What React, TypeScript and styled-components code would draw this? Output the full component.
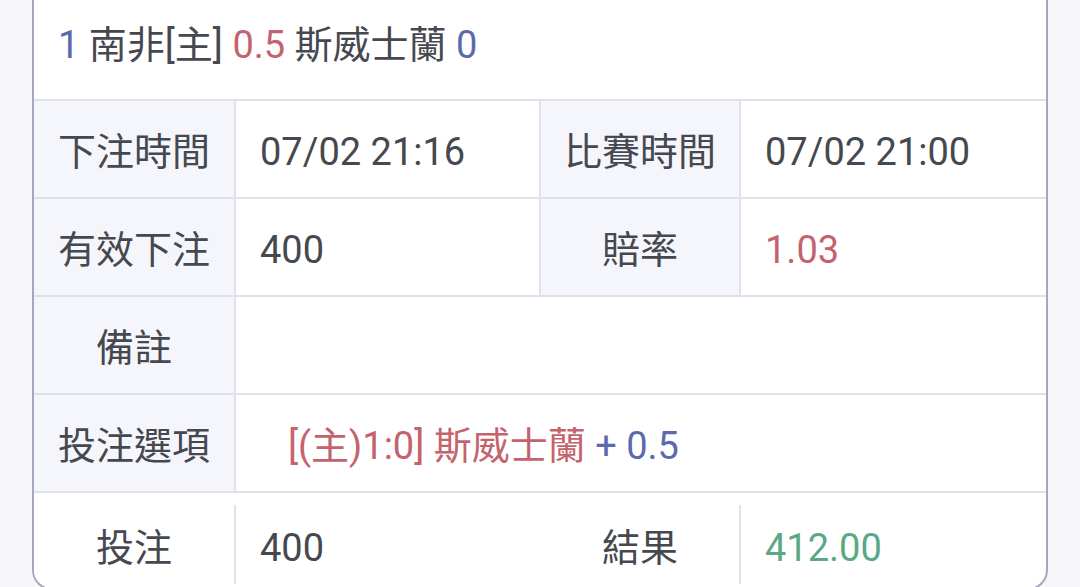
import React from "react";
import styled, { createGlobalStyle } from "styled-components";

const Global = createGlobalStyle`
  html, body { margin: 0; padding: 0; background: #f6f6f8; overflow: hidden; }
  body { font-family: "Roboto", "Noto Sans CJK TC", sans-serif; }
`;

const LINE = "#e0e1ea";
const LABEL_BG = "#f5f6fb";

const Page = styled.div`
  width: 1080px;
  height: 587px;
  padding-left: 32px;
  box-sizing: border-box;
  overflow: hidden;
`;

const Card = styled.div`
  width: 1016px;
  height: 590px;
  box-sizing: border-box;
  background: #ffffff;
  border: 2px solid #a6a7bf;
  border-top: none;
  border-radius: 0 0 20px 20px;
  display: flex;
  flex-direction: column;
  overflow: hidden;
  color: #46484f;
  font-size: 38px;
  line-height: 1;
`;

const Header = styled.div`
  flex: 0 0 auto;
  border-bottom: 2px solid ${LINE};
  display: flex;
  align-items: center;
  padding: 0 0 10px 24px;
  box-sizing: border-box;
  height: 101px;
  white-space: pre;
`;

const Tone = styled.span<{ $c: "red" | "blue" | "green" | "dark" }>`
  color: ${(p) =>
    p.$c === "red"
      ? "#c5636d"
      : p.$c === "blue"
      ? "#5c6aac"
      : p.$c === "green"
      ? "#58a984"
      : "#46484f"};
`;

const Row = styled.div<{ $last?: boolean }>`
  display: grid;
  grid-template-columns: 202px 305px 200px 1fr;
  height: 98px;
  flex: 0 0 auto;
  box-sizing: border-box;
  border-bottom: ${(p) => (p.$last ? "none" : `2px solid ${LINE}`)};
  padding: ${(p) => (p.$last ? "12px 0 7px" : "0")};
`;

const Label = styled.div<{ $plain?: boolean }>`
  background: ${(p) => (p.$plain ? "#ffffff" : LABEL_BG)};
  border-right: 2px solid ${LINE};
  display: flex;
  align-items: center;
  justify-content: center;
  padding-top: 6px;
  box-sizing: border-box;
`;

const Value = styled.div<{ $span?: number; $divider?: boolean; $indent?: number }>`
  grid-column: span ${(p) => p.$span ?? 1};
  display: flex;
  align-items: center;
  padding: 6px 0 0 ${(p) => 24 + (p.$indent ?? 0)}px;
  box-sizing: border-box;
  white-space: pre;
  border-right: ${(p) => (p.$divider ? `2px solid ${LINE}` : "none")};
`;

export default function App() {
  return (
    <>
      <Global />
      <Page>
        <Card>
          <Header>
            <Tone $c="blue">1</Tone>
            <Tone $c="dark"> 南非[主] </Tone>
            <Tone $c="red">0.5</Tone>
            <Tone $c="dark"> 斯威士蘭 </Tone>
            <Tone $c="blue">0</Tone>
          </Header>
          <Row>
            <Label>下注時間</Label>
            <Value $divider>07/02 21:16</Value>
            <Label>比賽時間</Label>
            <Value>07/02 21:00</Value>
          </Row>
          <Row>
            <Label>有效下注</Label>
            <Value $divider>400</Value>
            <Label>賠率</Label>
            <Value>
              <Tone $c="red">1.03</Tone>
            </Value>
          </Row>
          <Row>
            <Label>備註</Label>
            <Value $span={3}></Value>
          </Row>
          <Row>
            <Label>投注選項</Label>
            <Value $span={3} $indent={28}>
              <Tone $c="red">[(主)1:0] 斯威士蘭</Tone>
              <Tone $c="blue"> + 0.5</Tone>
            </Value>
          </Row>
          <Row $last>
            <Label $plain>投注</Label>
            <Value>400</Value>
            <Label $plain>結果</Label>
            <Value>
              <Tone $c="green">412.00</Tone>
            </Value>
          </Row>
        </Card>
      </Page>
    </>
  );
}
